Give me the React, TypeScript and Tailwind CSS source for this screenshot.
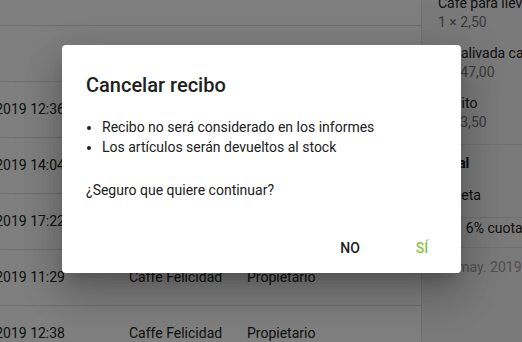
import React from 'react';

const rows = [
  { time: '', shop: '', role: '' },
  { time: '22/05/2019 12:36', shop: 'Caffe Felicidad', role: 'Propietario' },
  { time: '21/05/2019 14:04', shop: 'Caffe Felicidad', role: 'Propietario' },
  { time: '20/05/2019 17:22', shop: 'Caffe Felicidad', role: 'Propietario' },
  { time: '20/05/2019 11:29', shop: 'Caffe Felicidad', role: 'Propietario' },
  { time: '19/05/2019 12:38', shop: 'Caffe Felicidad', role: 'Propietario' },
];

const items = [
  { name: 'Café para llevar', price: '1 × 2,50' },
  { name: 'Ensalivada caprese', price: '1 × 47,00' },
  { name: 'Mojito', price: '1 × 3,50' },
];

function ReceiptList() {
  return (
    <div className="w-[421px] shrink-0 bg-white">
      <div className="h-[26px] border-b border-[#e0e0e0]"></div>
      {rows.map((r, i) => (
        <div key={i} className="h-[56px] border-b border-[#e0e0e0] flex items-center text-[14px] text-[#212121]">
          <div className="w-[65px] shrink-0 flex justify-end whitespace-nowrap">{r.time}</div>
          <div className="w-[64px] shrink-0"></div>
          <div className="w-[118px] shrink-0 whitespace-nowrap">{r.shop}</div>
          <div className="whitespace-nowrap">{r.role}</div>
        </div>
      ))}
    </div>
  );
}

function ReceiptDetail() {
  return (
    <div className="flex-1 bg-[#f5f5f5] border-l border-[#e0e0e0] text-[14px] leading-5 whitespace-nowrap overflow-hidden">
      <div className="-mt-[12px] px-4">
        {items.map((it) => (
          <div key={it.name} className="h-[50px] pt-[5px]">
            <div className="text-[#212121]">{it.name}</div>
            <div className="text-[#757575] leading-[18px]">{it.price}</div>
          </div>
        ))}
      </div>
      <div className="mt-[6px] border-b border-[#e0e0e0]"></div>
      <div className="px-4 pt-2 pb-3">
        <div className="font-bold text-[#212121]">Total</div>
        <div className="mt-3 text-[#212121]">Tarjeta</div>
      </div>
      <div className="border-b border-[#e0e0e0]"></div>
      <div className="px-4 pb-[9px]">
        <div className="text-[#212121]">IVA <span className="ml-[3px]">6% cuota</span></div>
      </div>
      <div className="border-b border-[#e0e0e0]"></div>
      <div className="px-4 pt-[9px] text-[#9e9e9e]">22 may. 2019 12:38</div>
    </div>
  );
}

export default function App() {
  return (
    <div className="relative w-[522px] h-[342px] overflow-hidden" style={{ fontFamily: 'Roboto, "Liberation Sans", sans-serif' }}>
      <div className="flex h-full">
        <ReceiptList />
        <ReceiptDetail />
      </div>

      {/* backdrop + dialog */}
      <div className="absolute inset-0 bg-black/50"></div>
      <div className="absolute left-[62px] top-[45px] w-[399px] h-[228px] bg-white rounded-[4px] shadow-[0_11px_15px_-7px_rgba(0,0,0,0.2),0_24px_38px_3px_rgba(0,0,0,0.14),0_9px_46px_8px_rgba(0,0,0,0.12)] flex flex-col">
        <h2 className="px-6 pt-6 text-[20px] leading-8 font-medium text-[#212121]">Cancelar recibo</h2>
        <div className="px-6 pt-4 text-[14px] leading-5 text-[#212121]">
          <ul className="list-disc pl-4">
            <li>Recibo no será considerado en los informes</li>
            <li>Los artículos serán devueltos al stock</li>
          </ul>
          <p className="mt-[23px]">¿Seguro que quiere continuar?</p>
        </div>
        <div className="mt-auto flex justify-end gap-2 p-[7px]">
          <button className="min-w-[64px] h-9 px-4 text-[14px] font-medium text-[#212121] uppercase">No</button>
          <button className="min-w-[64px] h-9 px-4 text-[14px] font-medium text-[#8bc34a] uppercase">Sí</button>
        </div>
      </div>
    </div>
  );
}
